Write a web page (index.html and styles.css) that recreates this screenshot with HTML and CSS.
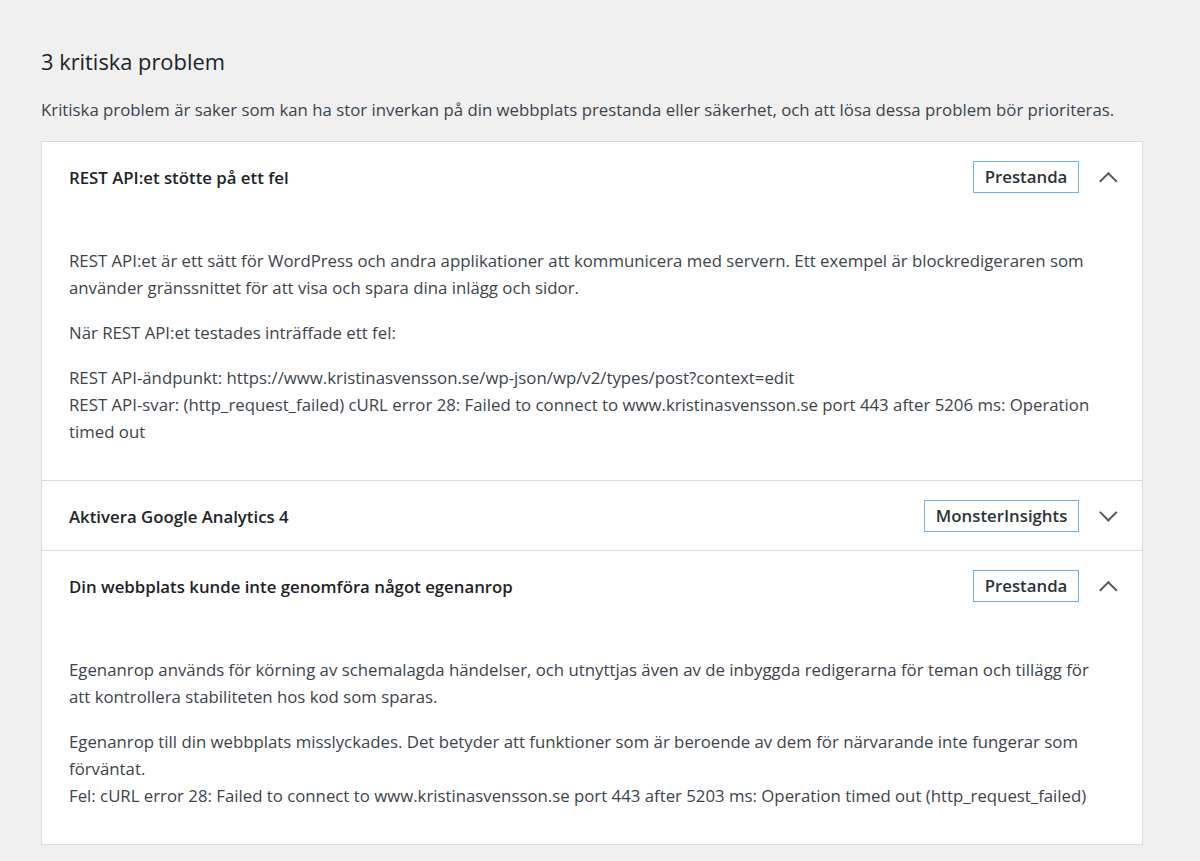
FILE: index.html
```html
<!DOCTYPE html>
<html lang="sv">
<head>
<meta charset="utf-8">
<title>Webbplatsens hälsa</title>
<link rel="stylesheet" href="styles.css">
</head>
<body>
<div class="wrap">
  <h2 class="count-title">3 kritiska problem</h2>
  <p class="desc">Kritiska problem är saker som kan ha stor inverkan på din webbplats prestanda eller säkerhet, och att lösa dessa problem bör prioriteras.</p>
  <div class="accordion">
    <div class="item open">
      <h4 class="heading">
        <button class="trigger" type="button">
          <span class="title">REST API:et stötte på ett fel</span>
          <span class="badge">Prestanda</span>
          <span class="icon"></span>
        </button>
      </h4>
      <div class="panel">
        <p>REST API:et är ett sätt för WordPress och andra applikationer att kommunicera med servern. Ett exempel är blockredigeraren som använder gränssnittet för att visa och spara dina inlägg och sidor.</p>
        <p>När REST API:et testades inträffade ett fel:</p>
        <p>REST API-ändpunkt: https://www.kristinasvensson.se/wp-json/wp/v2/types/post?context=edit<br>REST API-svar: (http_request_failed) cURL error 28: Failed to connect to www.kristinasvensson.se port 443 after 5206 ms: Operation timed out</p>
      </div>
    </div>
    <div class="item">
      <h4 class="heading">
        <button class="trigger" type="button">
          <span class="title">Aktivera Google Analytics 4</span>
          <span class="badge">MonsterInsights</span>
          <span class="icon"></span>
        </button>
      </h4>
    </div>
    <div class="item open">
      <h4 class="heading">
        <button class="trigger" type="button">
          <span class="title">Din webbplats kunde inte genomföra något egenanrop</span>
          <span class="badge">Prestanda</span>
          <span class="icon"></span>
        </button>
      </h4>
      <div class="panel">
        <p>Egenanrop används för körning av schemalagda händelser, och utnyttjas även av de inbyggda redigerarna för teman och tillägg för att kontrollera stabiliteten hos kod som sparas.</p>
        <p>Egenanrop till din webbplats misslyckades. Det betyder att funktioner som är beroende av dem för närvarande inte fungerar som förväntat.<br>Fel: cURL error 28: Failed to connect to www.kristinasvensson.se port 443 after 5203 ms: Operation timed out (http_request_failed)</p>
      </div>
    </div>
  </div>
</div>
</body>
</html>
```
FILE: styles.css
```css
* {
  box-sizing: border-box;
}

html, body {
  margin: 0;
  padding: 0;
  background: #f0f0f1;
}

body {
  font-family: "Open Sans", "Noto Sans", sans-serif;
  font-size: 16.8px;
  line-height: 27px;
  color: #3c434a;
}

.wrap {
  width: 1143px;
  padding: 47px 0 0 41px;
}

.count-title {
  margin: 0;
  font-size: 21.85px;
  line-height: 30px;
  font-weight: 400;
  color: #1d2327;
}

.desc {
  margin: 19px 0 18px;
}

.accordion {
  border: 1px solid #dcdcde;
  background: #fff;
}

.heading {
  margin: 0;
  font-size: inherit;
  line-height: inherit;
}

.item + .item .heading {
  border-top: 1px solid #dcdcde;
}

.trigger {
  display: flex;
  align-items: center;
  width: 100%;
  margin: 0;
  padding: 19px 27px 18px 27px;
  border: 0;
  background: #fff;
  font: inherit;
  color: #1d2327;
  text-align: left;
}

.title {
  flex-grow: 1;
  font-weight: 600;
}

.badge {
  padding: 1px 11px 2px;
  border: 1px solid #72aee6;
  line-height: 27px;
  font-weight: 600;
  color: #2c3338;
}

.icon {
  box-sizing: content-box;
  width: 10.67px;
  height: 10.67px;
  margin-left: 23px;
  border: solid #50575e;
  border-width: 0 2.67px 2.67px 0;
  transform: translateY(-4px) rotate(45deg);
}

.item.open .icon {
  transform: translateY(4px) rotate(-135deg);
}

.panel {
  padding: 18px 36px 17px 27px;
}

.panel p {
  margin: 18px 0;
}
```
